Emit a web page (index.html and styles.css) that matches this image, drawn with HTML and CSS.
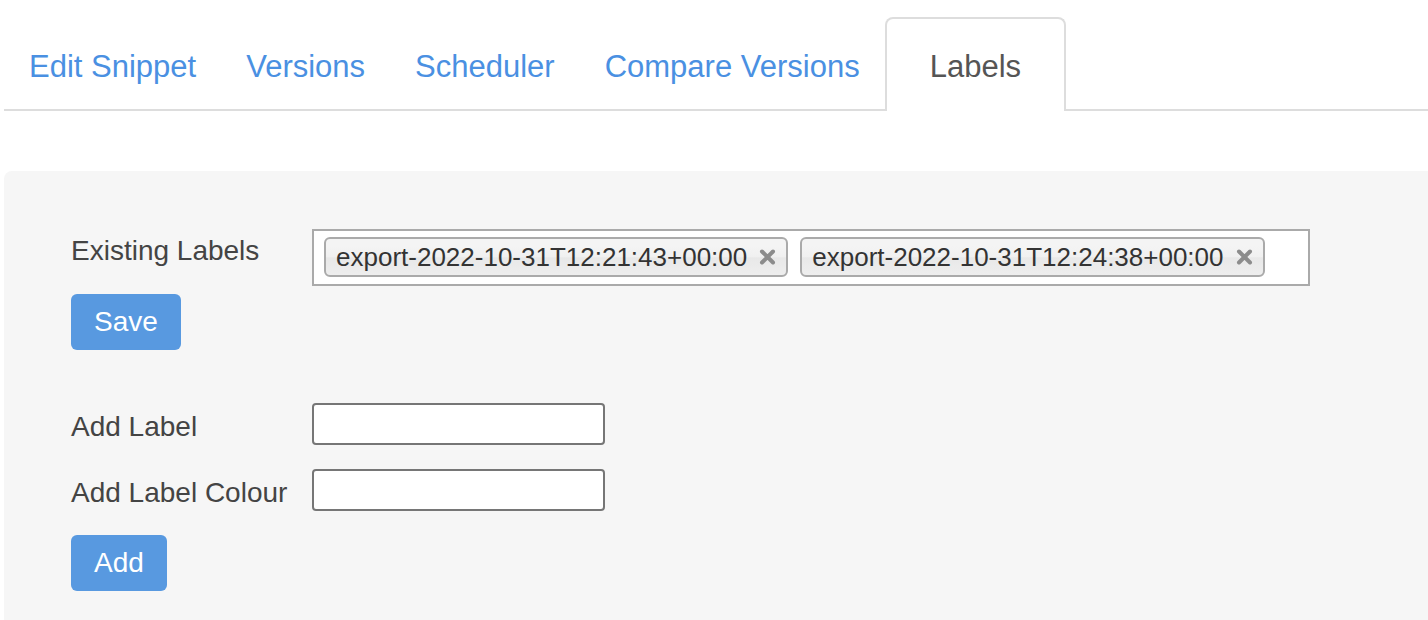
FILE: index.html
```html
<!DOCTYPE html>
<html>
<head>
<meta charset="utf-8">
<link rel="stylesheet" href="styles.css">
</head>
<body>
<div class="page">
  <ul class="tabs">
    <li class="tab"><a class="tab-link">Edit Snippet</a></li>
    <li class="tab"><a class="tab-link">Versions</a></li>
    <li class="tab"><a class="tab-link">Scheduler</a></li>
    <li class="tab"><a class="tab-link">Compare Versions</a></li>
    <li class="tab active"><a class="tab-link">Labels</a></li>
  </ul>
  <div class="panel">
    <div class="existing-row">
      <label class="lbl lbl-top">Existing Labels</label>
      <div class="tagbox">
        <span class="tag"><span class="tag-text">export-2022-10-31T12:21:43+00:00</span><svg class="tag-x" viewBox="0 0 17 16" width="17" height="16"><path d="M3 2.5 L14 13.5 M14 2.5 L3 13.5" stroke="#8c8c8c" stroke-width="4" stroke-linecap="round"/></svg></span>
        <span class="tag"><span class="tag-text">export-2022-10-31T12:24:38+00:00</span><svg class="tag-x" viewBox="0 0 17 16" width="17" height="16"><path d="M3 2.5 L14 13.5 M14 2.5 L3 13.5" stroke="#8c8c8c" stroke-width="4" stroke-linecap="round"/></svg></span>
      </div>
    </div>
    <button class="btn save-btn">Save</button>
    <div class="add-form">
      <div class="add-row">
        <label class="lbl lbl-mid">Add Label</label>
        <input class="txt" type="text">
      </div>
      <div class="add-row">
        <label class="lbl lbl-mid">Add Label Colour</label>
        <input class="txt" type="text">
      </div>
    </div>
    <button class="btn add-btn">Add</button>
  </div>
</div>
</body>
</html>
```

FILE: styles.css
```css
html, body {
  margin: 0;
  padding: 0;
  background: #ffffff;
}
body {
  font-family: "Liberation Sans", Arial, Helvetica, sans-serif;
  color: #444444;
  overflow: hidden;
}
.page {
  padding-left: 4px;
}
.tabs {
  list-style: none;
  margin: 0;
  padding: 17px 0 0 0;
  display: flex;
  border-bottom: 2px solid #dddddd;
}
.tab {
  margin-bottom: -2px;
}
.tab-link {
  display: block;
  padding: 4px 23px 0 23px;
  line-height: 88px;
  font-size: 31px;
  color: #4a90e2;
  border: 2px solid transparent;
  border-bottom: 0;
  border-radius: 8px 8px 0 0;
  cursor: pointer;
}
.tab.active .tab-link {
  color: #555555;
  background: #ffffff;
  border-color: #dddddd;
  padding-left: 43px;
  padding-right: 43px;
}
.panel {
  margin-top: 60px;
  background: #f6f6f6;
  border-radius: 8px 0 0 0;
  padding: 58px 0 29px 67px;
}
.lbl {
  font-size: 28px;
  line-height: 40px;
  color: #444444;
}
.lbl-top {
  padding-top: 2px;
}
.lbl-mid {
  box-sizing: border-box;
  height: 42px;
  line-height: 36px;
  padding-top: 6px;
}
.existing-row {
  display: grid;
  grid-template-columns: 241px 998px;
  align-items: start;
}
.tagbox {
  box-sizing: border-box;
  height: 57px;
  background: #ffffff;
  border: 2px solid #aaaaaa;
  padding: 6px 10px 0 10px;
  display: flex;
  gap: 12px;
  align-items: flex-start;
}
.tag {
  display: inline-flex;
  align-items: center;
  box-sizing: border-box;
  height: 40px;
  padding: 0 10px 0 10px;
  border: 2px solid #aaaaaa;
  border-radius: 6px;
  background: linear-gradient(#f4f4f4 20%, #f0f0f0 50%, #e8e8e8 52%, #eeeeee 100%);
  font-size: 26px;
  color: #333333;
  white-space: nowrap;
}
.tag-x {
  margin-left: 12px;
  display: block;
}
.btn {
  display: block;
  box-sizing: border-box;
  height: 56px;
  padding: 0 23px;
  border: 0;
  border-radius: 6px;
  background: #5899e0;
  color: #ffffff;
  font-family: "Liberation Sans", Arial, Helvetica, sans-serif;
  font-size: 28px;
  line-height: 56px;
}
.save-btn {
  margin-top: 8px;
}
.add-form {
  margin-top: 53px;
  display: flex;
  flex-direction: column;
  gap: 24px;
}
.add-row {
  display: grid;
  grid-template-columns: 241px 293px;
  align-items: center;
}
.txt {
  box-sizing: border-box;
  width: 293px;
  height: 42px;
  margin: 0;
  border: 2px solid #767676;
  border-radius: 4px;
  background: #ffffff;
}
.add-btn {
  margin-top: 24px;
}
```
